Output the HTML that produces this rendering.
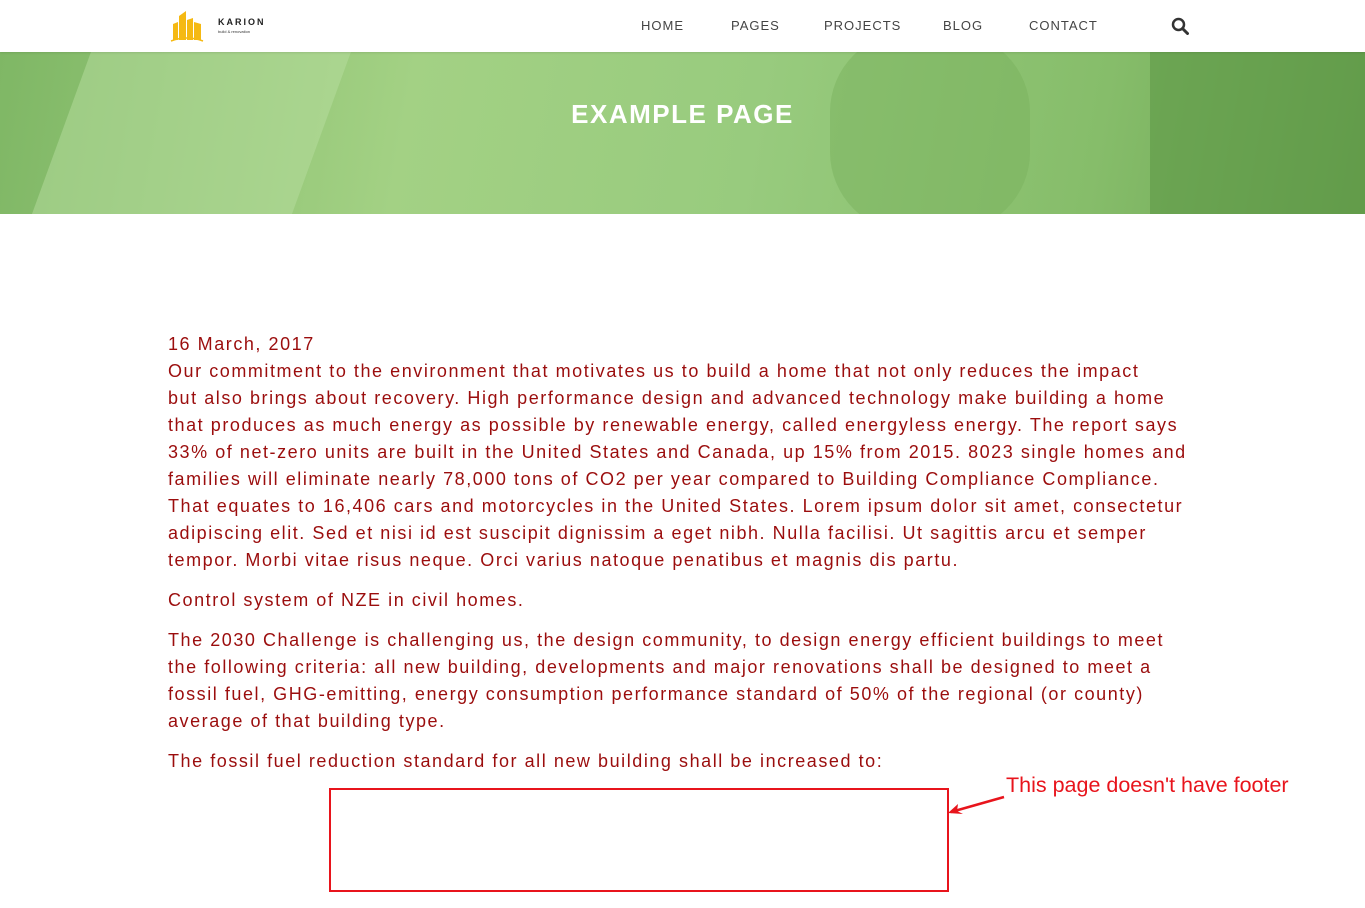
<!DOCTYPE html>
<html><head><meta charset="utf-8"><style>
body{margin:0;width:1365px;height:908px;overflow:hidden;background:#fff;font-family:"Liberation Sans",sans-serif;position:relative}
.nav{position:absolute;top:0;left:0;width:1365px;height:52px;background:#fff;z-index:2;box-shadow:0 1px 2px rgba(0,0,0,.1)}
.nav a{position:absolute;top:18px;font-size:13px;letter-spacing:1px;color:#444;text-decoration:none}
.hero{position:absolute;top:52px;left:0;width:1365px;height:162px;background:linear-gradient(100deg,#7fb765 0%,#a3d184 30%,#98cb7e 55%,#86bd6a 80%,#6aa251 100%);overflow:hidden}
.hero h1{position:absolute;top:47px;width:100%;text-align:center;margin:0;color:#fff;font-size:26px;letter-spacing:1.5px;font-weight:bold}
.txt{position:absolute;left:168px;top:331px;width:1100px;color:#9b0d0d;font-size:18px;line-height:27px;letter-spacing:1.55px;white-space:nowrap}
.txt p{margin:0 0 13px}
</style></head><body>
<div class="nav">
<svg style="position:absolute;left:170px;top:10px" width="34" height="32" viewBox="0 0 34 32"><path d="M3 30V14l5-2v18zM9 30V6l7-5v29zM17 30V10l6-2v22zM24 30V12l7 2v16z" fill="#f5b913"/><path d="M1 31q16-6 32 0" stroke="#f5b913" fill="none" stroke-width="1.5"/></svg>
<div style="position:absolute;left:218px;top:17px;font-size:9px;font-weight:bold;letter-spacing:2px;color:#222">KARION</div>
<div style="position:absolute;left:218px;top:29px;font-size:4px;color:#333">build &amp; renovation</div>
<a style="left:641px">HOME</a><a style="left:731px">PAGES</a><a style="left:824px">PROJECTS</a><a style="left:943px">BLOG</a><a style="left:1029px">CONTACT</a>
<svg style="position:absolute;left:1171px;top:17px" width="18" height="18" viewBox="0 0 18 18"><circle cx="7.5" cy="7.5" r="5.5" stroke="#333" stroke-width="2.5" fill="none"/><path d="M11.5 11.5l5 5" stroke="#333" stroke-width="3" stroke-linecap="round"/></svg>
</div>
<div class="hero">
<div style="position:absolute;left:60px;top:0;width:260px;height:170px;background:#b8dd9f;opacity:.5;transform:skewX(-20deg)"></div>
<div style="position:absolute;left:830px;top:-20px;width:200px;height:200px;background:#7ab25e;opacity:.5;border-radius:40%"></div>
<div style="position:absolute;left:1150px;top:0;width:215px;height:162px;background:#5e9846;opacity:.6"></div>
<h1>EXAMPLE PAGE</h1>
</div>
<div class="txt">
<p style="margin:0">16 March, 2017</p>
<p>Our commitment to the environment that motivates us to build a home that not only reduces the impact<br>but also brings about recovery. High performance design and advanced technology make building a home<br>that produces as much energy as possible by renewable energy, called energyless energy. The report says<br>33% of net-zero units are built in the United States and Canada, up 15% from 2015. 8023 single homes and<br>families will eliminate nearly 78,000 tons of CO2 per year compared to Building Compliance Compliance.<br>That equates to 16,406 cars and motorcycles in the United States. Lorem ipsum dolor sit amet, consectetur<br>adipiscing elit. Sed et nisi id est suscipit dignissim a eget nibh. Nulla facilisi. Ut sagittis arcu et semper<br>tempor. Morbi vitae risus neque. Orci varius natoque penatibus et magnis dis partu.</p>
<p>Control system of NZE in civil homes.</p>
<p>The 2030 Challenge is challenging us, the design community, to design energy efficient buildings to meet<br>the following criteria: all new building, developments and major renovations shall be designed to meet a<br>fossil fuel, GHG-emitting, energy consumption performance standard of 50% of the regional (or county)<br>average of that building type.</p>
<p>The fossil fuel reduction standard for all new building shall be increased to:</p>
</div>
<div style="position:absolute;left:329px;top:788px;width:616px;height:100px;border:2px solid #e8141c"></div>
<svg style="position:absolute;left:945px;top:792px" width="62" height="24"><path d="M59 5L6 20" stroke="#e8141c" stroke-width="2.5"/><path d="M3 21l10-9-1 7 6 3z" fill="#e8141c"/></svg>
<div style="position:absolute;left:1006px;top:773px;font-size:21.5px;color:#e8141c">This page doesn't have footer</div>
</body></html>
